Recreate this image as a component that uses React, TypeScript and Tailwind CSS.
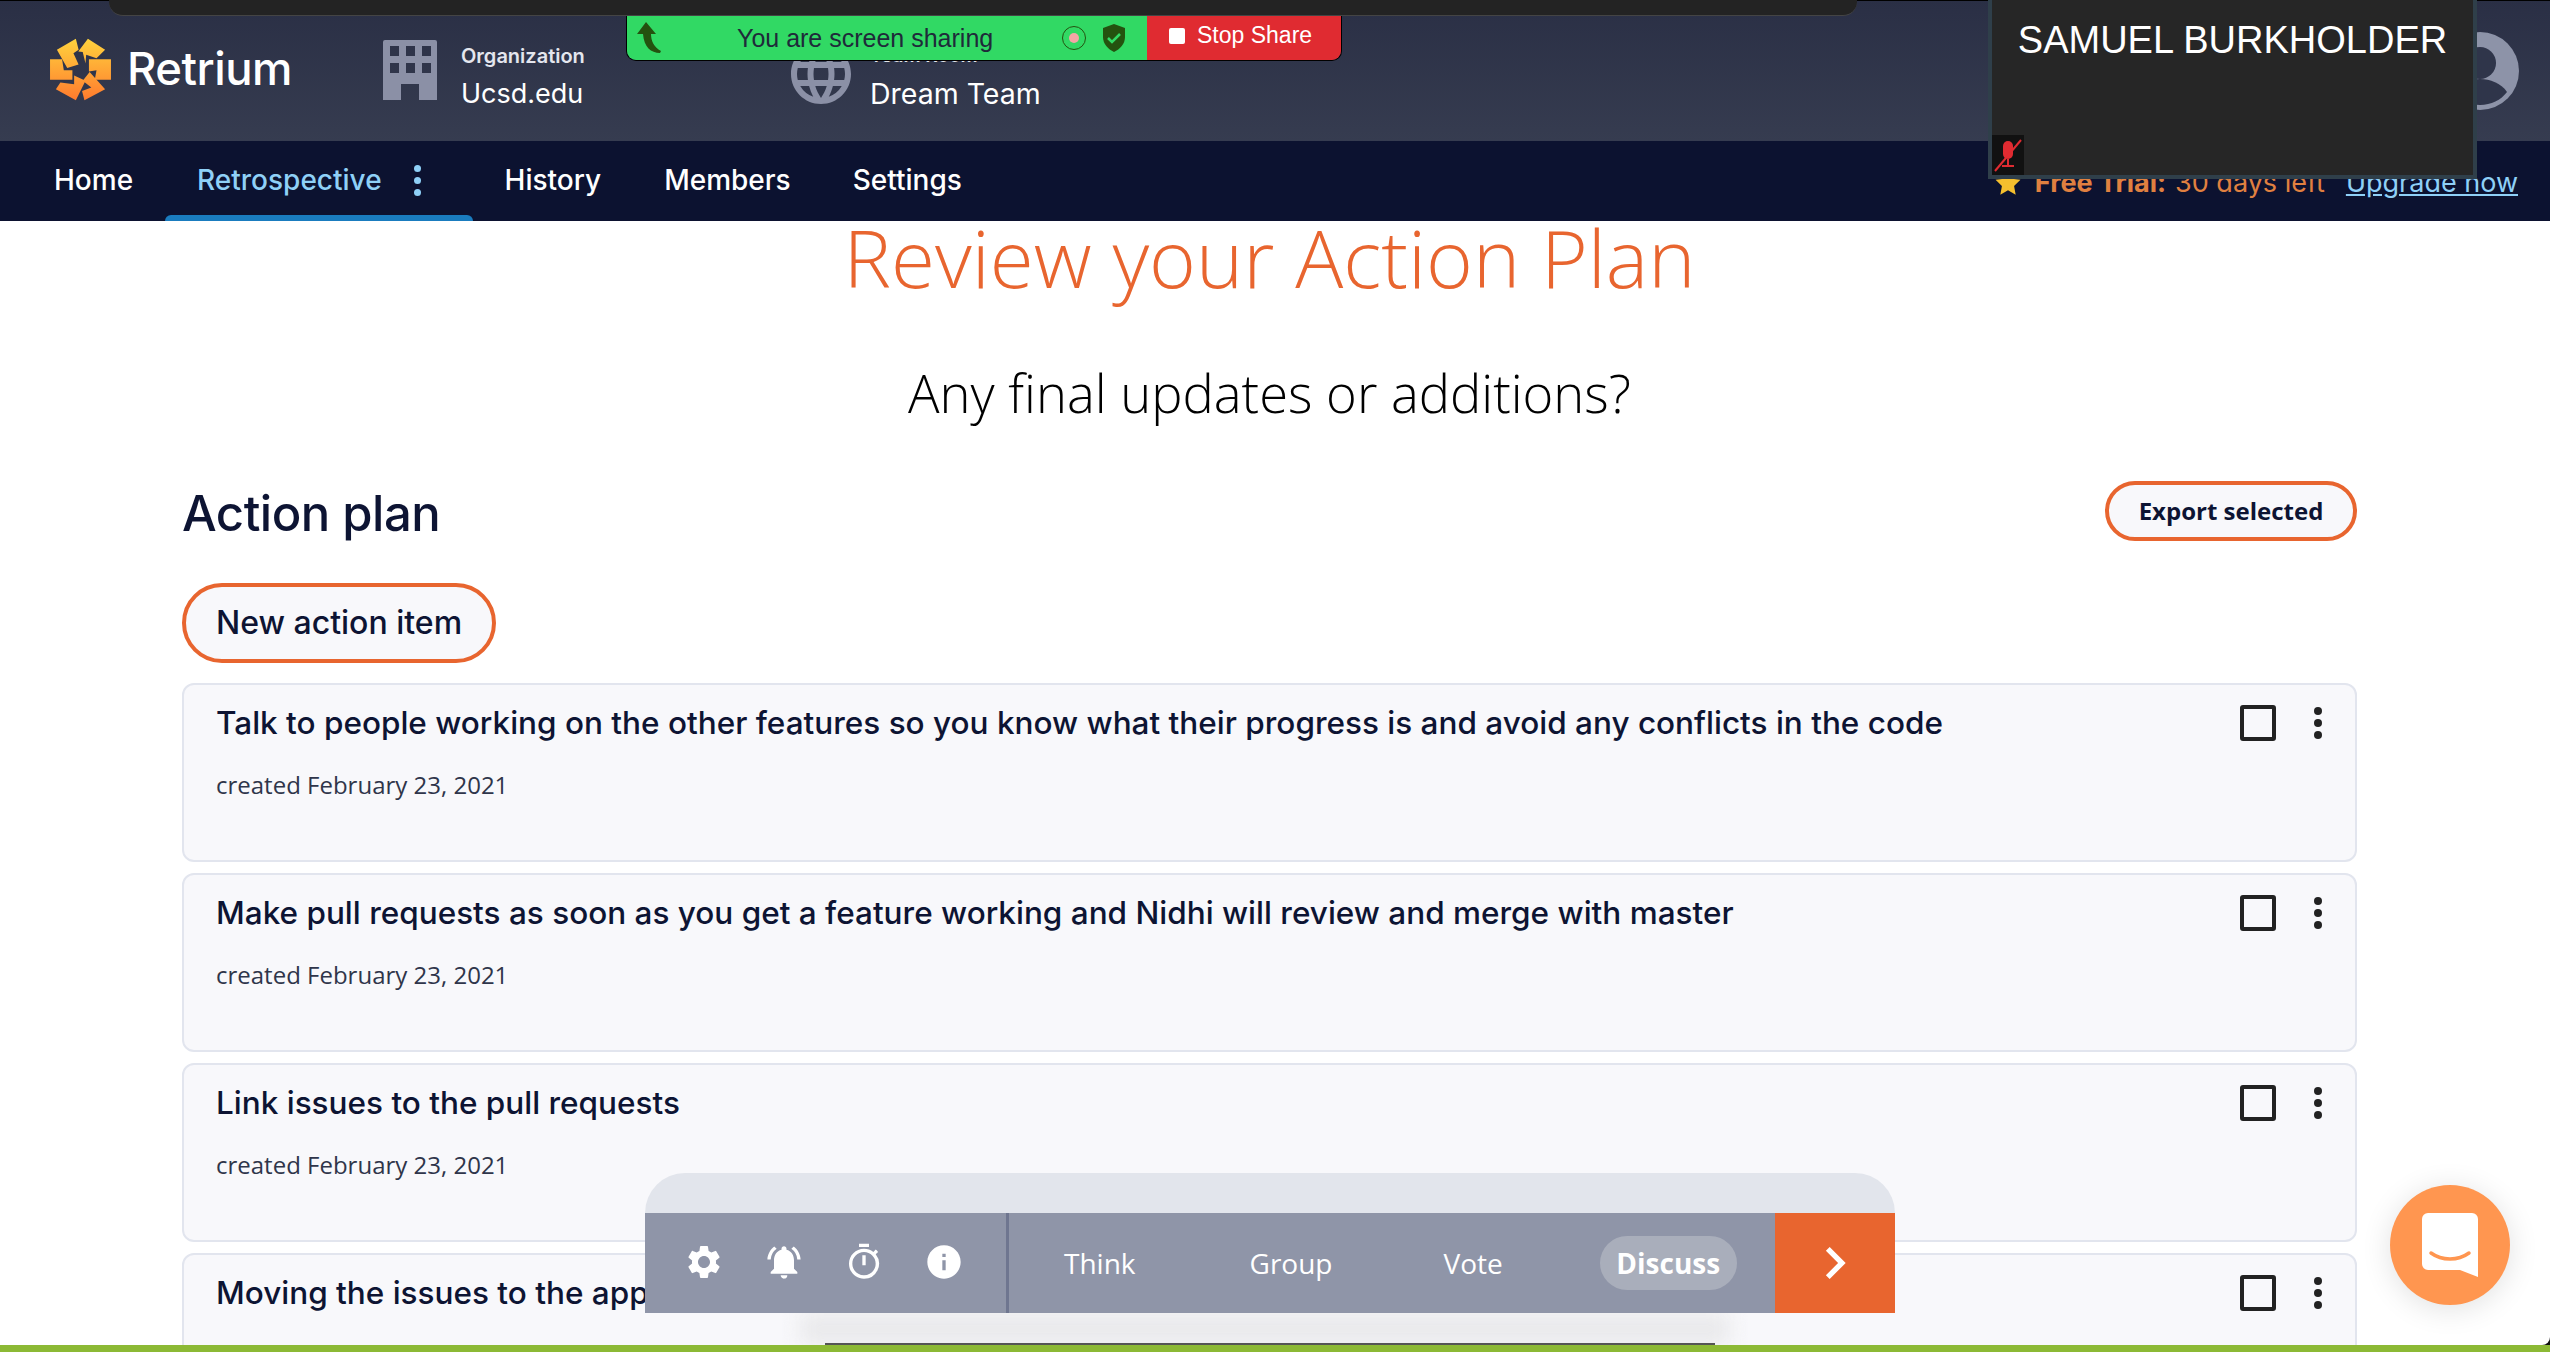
import { MdInfo, MdLanguage, MdNotificationsActive, MdOutlineTimer, MdSettings, MdChevronRight } from "react-icons/md";

const dm = "font-['Inter',sans-serif]";
const open = "font-['Open_Sans',sans-serif]";

const items = [
  "Talk to people working on the other features so you know what their progress is and avoid any conflicts in the code",
  "Make pull requests as soon as you get a feature working and Nidhi will review and merge with master",
  "Link issues to the pull requests",
  "Moving the issues to the appropriate column",
];

function Logo() {
  return (
    <svg width="63" height="65" viewBox="27 30 183 185">
      <defs>
        <linearGradient id="logo" gradientUnits="userSpaceOnUse" x1="0" y1="33" x2="0" y2="212">
          <stop offset="0" stopColor="#ffd33d" />
          <stop offset="1" stopColor="#ff7a2e" />
        </linearGradient>
      </defs>
      <g fill="url(#logo)">
        <polygon points="50,65 105,33 113,65 98,75 113,108 80,118" />
        <polygon points="112,70 140,33 190,65 165,90 135,80 133,105 125,72" />
        <polygon points="143,93 207,93 207,152 160,152 165,125 143,128" />
        <polygon points="145,130 190,180 130,212 123,185 150,175 125,155" />
        <polygon points="47,180 60,160 100,165 100,140 133,155 105,212" />
        <polygon points="30,93 65,93 70,125 95,125 95,152 30,152" />
      </g>
    </svg>
  );
}

function BuildingIcon() {
  return (
    <svg width="54" height="60" viewBox="0 0 54 60" fill="#8b90a6">
      <path
        fillRule="evenodd"
        d="M2 0h50a2 2 0 0 1 2 2v58H36V44H18v16H0V2a2 2 0 0 1 2-2zM7 6v10h9V6zm16 0v10h9V6zm16 0v10h9V6zM7 23v10h9V23zm16 0v10h9V23zm16 0v10h9V23z"
      />
    </svg>
  );
}

function ActionCard({ text }: { text: string }) {
  return (
    <div className="flex h-[179px] shrink-0 items-start justify-between rounded-xl border-2 border-[#e2e5ee] bg-[#f8f8fb] pl-[32px] pr-[33px]">
      <div>
        <div className={`${dm} mt-[18px] text-[31.5px] leading-[40px] font-medium text-[#0d1433]`}>{text}</div>
        <div className={`${open} mt-[26px] text-[24px] leading-[32px] text-[#2f354a]`}>created February 23, 2021</div>
      </div>
      <div className="mt-[20px] flex items-start gap-[38px]">
        <div className="h-[36px] w-[36px] rounded-[3px] border-[4px] border-[#222]" />
        <div className="flex flex-col gap-[4px] pt-[2px]">
          <span className="h-[8px] w-[8px] rounded-full bg-[#222]" />
          <span className="h-[8px] w-[8px] rounded-full bg-[#222]" />
          <span className="h-[8px] w-[8px] rounded-full bg-[#222]" />
        </div>
      </div>
    </div>
  );
}

export default function App() {
  return (
    <div className="relative flex h-[1352px] w-[2550px] flex-col overflow-hidden bg-white">
      {/* top header */}
      <header className="relative z-10 flex h-[141px] shrink-0 items-center bg-gradient-to-b from-[#2a2f45] to-[#363c50] pb-[2px] pl-[49px] text-white">
        <Logo />
        <span className={`${dm} ml-[15px] w-[256px] text-[45.5px] font-medium tracking-[-0.5px]`}>Retrium</span>
        <BuildingIcon />
        <div className={`${dm} ml-[24px] mt-[14px] w-[329px]`}>
          <div className="text-[20px] leading-[30px] font-semibold text-[#e4e6ee]">Organization</div>
          <div className="mt-[5px] text-[27px] leading-[36px]">Ucsd.edu</div>
        </div>
        <MdLanguage className="-ml-[5px] mt-[8px] text-[#8b90a6]" size={72} />
        <div className={`${dm} ml-[13px] mt-[14px]`}>
          <div className="text-[19px] leading-[30px] font-semibold text-[#e4e6ee]">Team Room</div>
          <div className="mt-[5px] text-[28.5px] leading-[36px]">Dream Team</div>
        </div>
      </header>

      {/* nav */}
      <nav className={`${dm} relative z-10 flex h-[80px] shrink-0 items-center bg-[#0c1230] pb-[2px] pl-[54px] pr-[32px] text-[28px] font-medium text-white`}>
        <span>Home</span>
        <span className="relative ml-[64px] flex h-full items-center text-[#8fd0f7]">
          Retrospective
          <span className="ml-[32px] flex flex-col gap-[5px]">
            <span className="h-[7px] w-[7px] rounded-full bg-[#8fd0f7]" />
            <span className="h-[7px] w-[7px] rounded-full bg-[#8fd0f7]" />
            <span className="h-[7px] w-[7px] rounded-full bg-[#8fd0f7]" />
          </span>
          <span className="absolute -bottom-[2px] -left-[32px] -right-[52px] h-[6px] rounded-t-md bg-[#1a7cbf]" />
        </span>
        <span className="ml-[84px]">History</span>
        <span className="ml-[63px]">Members</span>
        <span className="ml-[62px]">Settings</span>
        <div className="ml-auto flex items-center pt-[6px] text-[27px]">
          <svg width="28" height="28" viewBox="0 0 24 24" fill="#f5bf2e"><path d="M12 1.5l3.2 6.9 7.5.9-5.5 5.2 1.4 7.5L12 18.3l-6.6 3.7 1.4-7.5L1.3 9.3l7.5-.9z" /></svg>
          <span className="ml-[13px] font-bold text-[#e08040]">Free Trial:</span>
          <span className="ml-[9px] font-normal text-[#e08040]">30 days left</span>
          <span className="ml-[21px] font-normal text-[#8fd0f7] underline">Upgrade now</span>
        </div>
      </nav>

      {/* page content */}
      <main className="flex min-h-0 flex-1 flex-col pl-[182px] pr-[193px]">
        <h1 className={`${open} h-[72px] text-center text-[80px] leading-[72px] font-light text-[#e8652f]`}>Review your Action Plan</h1>
        <div className={`${open} mt-[70px] h-[60px] text-center text-[52.5px] leading-[60px] font-light text-black`}>Any final updates or additions?</div>
        <div className="mt-[58px] flex h-[60px] shrink-0 items-center justify-between">
          <h2 className={`${dm} pt-[5px] text-[49px] font-medium tracking-[-0.5px] text-[#0d1433]`}>Action plan</h2>
          <button className={`${open} flex h-[60px] w-[252px] items-center justify-center rounded-full border-[4px] border-[#e8652f] bg-[#f8f8fb] text-[24px] font-bold text-[#0d1433]`}>
            Export selected
          </button>
        </div>
        <div className="mt-[42px] shrink-0">
          <button className={`${dm} flex h-[80px] w-[314px] items-center justify-center rounded-full border-[4px] border-[#e8652f] bg-[#f8f8fb] text-[32px] font-medium text-[#0d1433]`}>
            New action item
          </button>
        </div>
        <div className="mt-[20px] flex flex-col gap-[11px]">
          {items.map((t) => (
            <ActionCard key={t} text={t} />
          ))}
        </div>
      </main>

      {/* zoom share banner */}
      <div className="absolute left-0 top-0 z-20 h-px w-full bg-black" />
      <div className="absolute left-[109px] top-0 z-20 h-[16px] w-[1748px] rounded-b-[14px] border-b border-[#444] bg-[#232323]" />
      <div className={`absolute left-[626px] top-[16px] z-20 flex h-[45px] w-[716px] overflow-hidden rounded-b-[10px] border border-t-0 border-black font-['Liberation_Sans',sans-serif]`}>
        <div className="relative flex w-[520px] items-center bg-[#31d964] text-[#1f2a3a]">
          <svg className="ml-[9px]" width="26" height="32" viewBox="0 0 26 32" fill="#24520f">
            <path d="M10 0l10 12h-5c0 7 3 13 10 17l-1 2c-9 0-16-6-17-19H1z" />
          </svg>
          <span className="ml-[75px] pt-[2px] text-[25px]">You are screen sharing</span>
          <span className="ml-[69px] flex h-[24px] w-[24px] items-center justify-center rounded-full border border-[#24520f]">
            <span className="h-[10px] w-[10px] rounded-full bg-[#f5a5a5]" />
          </span>
          <svg className="ml-[17px]" width="22" height="28" viewBox="0 0 22 28">
            <path d="M11 0l11 4v9c0 7-5 12-11 15C5 25 0 20 0 13V4z" fill="#24520f" />
            <path d="M5 14l4 4 8-8" fill="none" stroke="#31d964" strokeWidth="2.5" />
          </svg>
        </div>
        <div className="flex flex-1 items-center bg-[#e02b31] pb-[5px] pl-[22px] text-white">
          <span className="h-[16px] w-[16px] rounded-[2px] bg-white" />
          <span className="ml-[12px] text-[23px]">Stop Share</span>
        </div>
      </div>

      {/* avatar sits behind the video window */}
      <svg className="absolute left-[2441px] top-[32px] z-10" width="78" height="78" viewBox="0 0 78 78">
        <circle cx="39" cy="39" r="39" fill="#8d93a8" />
        <circle cx="39" cy="31" r="16" fill="#2f354a" />
        <path d="M12 60c6-9 17-13 27-13s21 4 27 13c-6 8-16 13-27 13S18 68 12 60z" fill="#2f354a" />
      </svg>

      {/* video window */}
      <div className="absolute left-[1988px] top-0 z-20 h-[179px] w-[489px] border-[4px] border-t-0 border-[#2f3f4a] bg-[#262626]">
        <div className="mt-[20px] text-center font-['Liberation_Sans',sans-serif] text-[38px] leading-[40px] text-white">SAMUEL BURKHOLDER</div>
        <div className="absolute bottom-0 left-0 flex h-[40px] w-[32px] items-center justify-center bg-[#111]">
          <svg width="28" height="34" viewBox="0 0 28 34" fill="#e02b31">
            <rect x="9" y="3" width="10" height="18" rx="5" />
            <path d="M13 21h2v6h5v2H8v-2h5z" />
            <path d="M1 33L27 2" stroke="#e02b31" strokeWidth="2" />
          </svg>
        </div>
      </div>

      {/* facilitation toolbar */}
      <div className="absolute left-[645px] top-[1173px] z-30 w-[1250px]">
        <div className="h-[40px] rounded-t-[40px] bg-[#e2e5ec]" />
        <div className="flex h-[100px] items-stretch bg-[#8f95a8] text-white">
          <div className="flex w-[364px] shrink-0 items-center border-r-[3px] border-[#6f7690] pl-[39px]">
            <div className="flex items-center gap-[40px] pb-[3px]">
              <MdSettings size={40} />
              <MdNotificationsActive size={40} />
              <MdOutlineTimer size={40} />
              <MdInfo size={40} />
            </div>
          </div>
          <div className={`${open} flex flex-1 items-center text-[28px]`}>
            <span className="ml-[55px]">Think</span>
            <span className="ml-[114px]">Group</span>
            <span className="ml-[111px]">Vote</span>
            <span className="ml-[97px] flex h-[54px] w-[137px] items-center justify-center rounded-full bg-[#a9aebb] font-bold">Discuss</span>
          </div>
          <div className="flex w-[120px] shrink-0 items-center justify-center bg-[#e8652f]">
            <MdChevronRight size={64} />
          </div>
        </div>
      </div>

      {/* dock shadow + green strip */}
      <div className="absolute left-[800px] top-[1313px] z-20 h-[32px] w-[930px] bg-[#e9e9eb] blur-[10px]" />
      <div className="absolute left-[825px] top-[1343px] z-20 h-[2px] w-[890px] bg-[#555]" />
      <div className="absolute bottom-0 left-0 z-30 h-[7px] w-full bg-[#8cb935]" />
      <div className="absolute bottom-[7px] right-0 z-20 h-[10px] w-[8px] bg-white">
        <div className="h-full w-full rounded-br-[8px] bg-white shadow-[4px_4px_0_4px_#111]" />
      </div>

      {/* chat launcher */}
      <div className="absolute left-[2390px] top-[1185px] z-30 flex h-[120px] w-[120px] items-center justify-center rounded-full bg-[#ff9650] shadow-[0_4px_30px_rgba(0,0,0,0.12)]">
        <svg width="56" height="64" viewBox="0 0 56 64">
          <path d="M6 0h44a6 6 0 0 1 6 6v58l-18-7H6a6 6 0 0 1-6-6V6a6 6 0 0 1 6-6z" fill="#fff" />
          <path d="M9 40c11 8 27 8 38 0" fill="none" stroke="#ff9650" strokeWidth="3.5" strokeLinecap="round" />
        </svg>
      </div>
    </div>
  );
}
